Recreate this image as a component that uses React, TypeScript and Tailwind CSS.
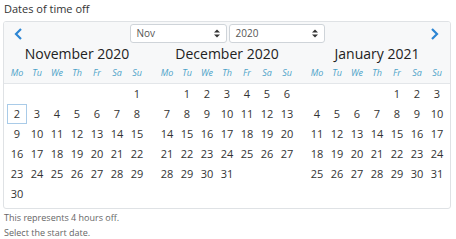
import React from "react";

const WD = ["Mo", "Tu", "We", "Th", "Fr", "Sa", "Su"];

function monthCells(offset: number, days: number) {
  const cells: (number | null)[] = [];
  for (let i = 0; i < offset; i++) cells.push(null);
  for (let d = 1; d <= days; d++) cells.push(d);
  while (cells.length < 42) cells.push(null);
  return cells;
}

const months = [
  { title: "November 2020", offset: 6, days: 30 },
  { title: "December 2020", offset: 1, days: 31 },
  { title: "January 2021", offset: 4, days: 31 },
];

function SortIcon() {
  return (
    <svg width="6" height="9" viewBox="0 0 6 9">
      <path d="M0 3.5 L3 0.5 L6 3.5 Z" fill="#333" />
      <path d="M0 5.5 L3 8.5 L6 5.5 Z" fill="#333" />
    </svg>
  );
}

function Select({ value, w }: { value: string; w: string }) {
  return (
    <div
      className={`${w} h-[19px] flex items-center justify-between pl-[6px] pr-[6px] bg-white border border-[#cfd4d9] rounded-[3px] text-[10px] text-[#555]`}
    >
      <span>{value}</span>
      <SortIcon />
    </div>
  );
}

export default function App() {
  return (
    <div
      className="w-[456px] h-[239px] bg-white text-[#333] pl-[3px]"
      style={{ fontFamily: '"Open Sans", "Noto Sans", sans-serif' }}
    >
      <div className="pt-[1px] pl-[1px] text-[11px] leading-[15px] h-[19px]">Dates of time off</div>
      <div className="mt-[2px] w-[448px] border border-[#dfe2e5] rounded-[3px] overflow-hidden">
        <div className="bg-[#f7f8f9] border-b border-[#e3e6e9] px-[3px]">
          <div className="relative h-[23px] pt-[2px] flex justify-center gap-[2px]">
            <div className="absolute left-[7px] top-[6px]">
              <svg width="9" height="12" viewBox="0 0 9 12">
                <path d="M7 1 L2 6 L7 11" stroke="#2d86d4" strokeWidth="2.2" fill="none" />
              </svg>
            </div>
            <Select value="Nov" w="w-[97px]" />
            <Select value="2020" w="w-[96px]" />
            <div className="absolute right-[8px] top-[6px]">
              <svg width="9" height="12" viewBox="0 0 9 12">
                <path d="M2 1 L7 6 L2 11" stroke="#2d86d4" strokeWidth="2.2" fill="none" />
              </svg>
            </div>
          </div>
          <div className="flex gap-[10px]">
            {months.map((m) => (
              <div key={m.title} className="w-[140px]">
                <div className="text-center text-[14px] leading-[18px] text-[#222]">{m.title}</div>
                <div className="grid grid-cols-7 h-[20px] items-center">
                  {WD.map((d) => (
                    <div key={d} className="text-center italic text-[9px] text-[#4aa2c8]">
                      {d}
                    </div>
                  ))}
                </div>
              </div>
            ))}
          </div>
        </div>
        <div className="flex gap-[10px] px-[3px] pb-[4px]">
          {months.map((m, mi) => (
            <div key={m.title} className="w-[140px] grid grid-cols-7">
              {monthCells(m.offset, m.days).map((d, i) => (
                <div
                  key={i}
                  className={`h-[20px] flex items-center justify-center text-[11px] ${
                    mi === 0 && d === 2 ? "border border-[#a9cbe8]" : ""
                  }`}
                >
                  {d ?? ""}
                </div>
              ))}
            </div>
          ))}
        </div>
      </div>
      <div className="pl-[1px] pt-[1px] text-[9px] leading-[15px] text-[#666]">
        <div>This represents 4 hours off.</div>
        <div>Select the start date.</div>
      </div>
    </div>
  );
}
